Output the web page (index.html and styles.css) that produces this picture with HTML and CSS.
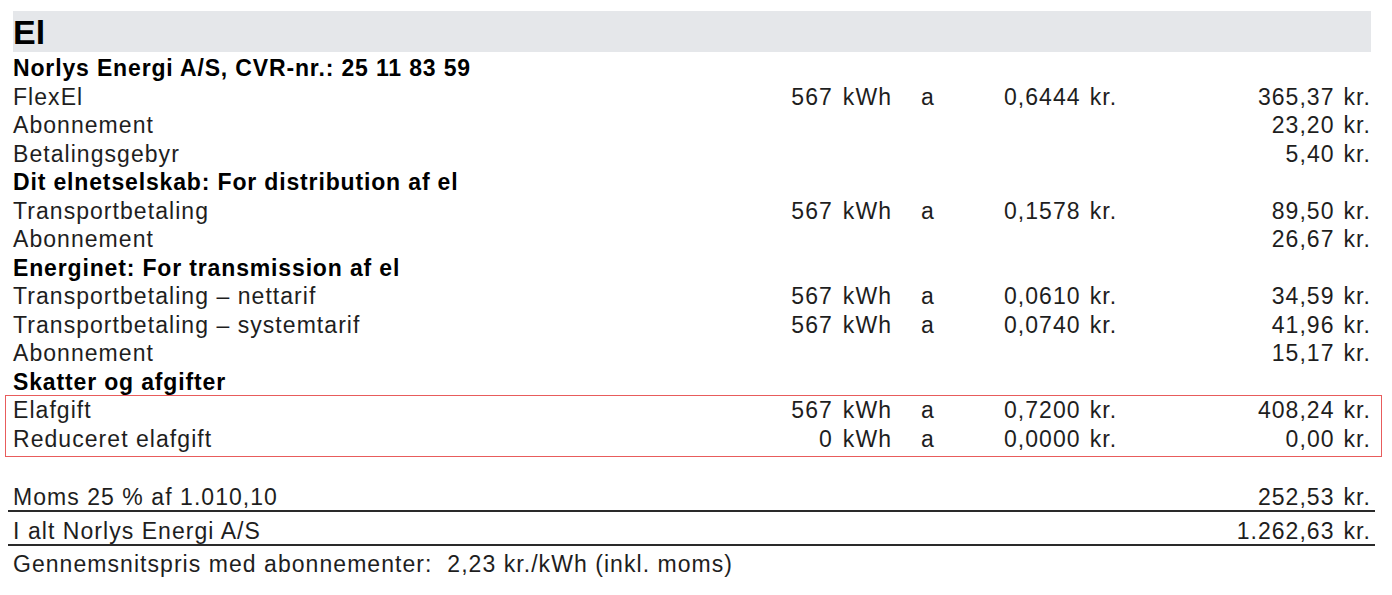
FILE: index.html
```html
<!DOCTYPE html>
<html lang="da">
<head>
<meta charset="utf-8">
<title>El</title>
<link rel="stylesheet" href="styles.css">
</head>
<body>
<div class="sheet">
  <div class="bar">El</div>

  <div class="row head"><span class="label">Norlys Energi A/S, CVR-nr.: 25 11 83 59</span></div>
  <div class="row"><span class="label">FlexEl</span><span class="qty">567<span class="unit">kWh</span></span><span class="a">a</span><span class="rate">0,6444<span class="unit">kr.</span></span><span class="amt">365,37<span class="unit">kr.</span></span></div>
  <div class="row"><span class="label">Abonnement</span><span class="qty"></span><span class="a"></span><span class="rate"></span><span class="amt">23,20<span class="unit">kr.</span></span></div>
  <div class="row"><span class="label">Betalingsgebyr</span><span class="qty"></span><span class="a"></span><span class="rate"></span><span class="amt">5,40<span class="unit">kr.</span></span></div>

  <div class="row head"><span class="label">Dit elnetselskab: For distribution af el</span></div>
  <div class="row"><span class="label">Transportbetaling</span><span class="qty">567<span class="unit">kWh</span></span><span class="a">a</span><span class="rate">0,1578<span class="unit">kr.</span></span><span class="amt">89,50<span class="unit">kr.</span></span></div>
  <div class="row"><span class="label">Abonnement</span><span class="qty"></span><span class="a"></span><span class="rate"></span><span class="amt">26,67<span class="unit">kr.</span></span></div>

  <div class="row head"><span class="label">Energinet: For transmission af el</span></div>
  <div class="row"><span class="label">Transportbetaling – nettarif</span><span class="qty">567<span class="unit">kWh</span></span><span class="a">a</span><span class="rate">0,0610<span class="unit">kr.</span></span><span class="amt">34,59<span class="unit">kr.</span></span></div>
  <div class="row"><span class="label">Transportbetaling – systemtarif</span><span class="qty">567<span class="unit">kWh</span></span><span class="a">a</span><span class="rate">0,0740<span class="unit">kr.</span></span><span class="amt">41,96<span class="unit">kr.</span></span></div>
  <div class="row"><span class="label">Abonnement</span><span class="qty"></span><span class="a"></span><span class="rate"></span><span class="amt">15,17<span class="unit">kr.</span></span></div>

  <div class="row head"><span class="label">Skatter og afgifter</span></div>
  <div class="highlight">
    <div class="row"><span class="label">Elafgift</span><span class="qty">567<span class="unit">kWh</span></span><span class="a">a</span><span class="rate">0,7200<span class="unit">kr.</span></span><span class="amt">408,24<span class="unit">kr.</span></span></div>
    <div class="row"><span class="label">Reduceret elafgift</span><span class="qty">0<span class="unit">kWh</span></span><span class="a">a</span><span class="rate">0,0000<span class="unit">kr.</span></span><span class="amt">0,00<span class="unit">kr.</span></span></div>
  </div>

  <div class="sum first"><span class="label">Moms 25 % af 1.010,10</span><span class="amt">252,53<span class="unit">kr.</span></span></div>
  <div class="sum"><span class="label">I alt Norlys Energi A/S</span><span class="amt">1.262,63<span class="unit">kr.</span></span></div>
  <div class="note">Gennemsnitspris med abonnementer:&nbsp; 2,23 kr./kWh (inkl. moms)</div>
</div>
</body>
</html>
```

FILE: styles.css
```css
html, body {
  margin: 0;
  padding: 0;
  background: #ffffff;
}

body {
  font-family: "Liberation Sans", Arial, sans-serif;
  color: #1e1e1e;
}

.sheet {
  width: 1358px;
  padding: 11px 0 0 13px;
}

.bar {
  background: #e5e7ea;
  height: 39px;
  padding-top: 2px;
  line-height: 39px;
  font-size: 34px;
  font-weight: bold;
  color: #000;
  margin-bottom: 2px;
}

.row {
  display: grid;
  grid-template-columns: 1fr 111px 112px 156px 211px;
  height: 28.5px;
  line-height: 28.5px;
  font-size: 23px;
  letter-spacing: 1.05px;
  white-space: nowrap;
}

.row.head {
  display: block;
  font-weight: bold;
  color: #000;
  letter-spacing: 0.85px;
}

.qty {
  text-align: right;
}

.a {
  padding-left: 29px;
}

.amt {
  text-align: right;
}

.unit {
  margin-left: 10px;
}

.rate .unit,
.amt .unit {
  margin-left: 9px;
}

.highlight {
  margin: -1px -11px 0 -8px;
  padding: 0 10px 3px 7px;
  border: 1px solid #e85c5c;
}

.sum {
  display: flex;
  justify-content: space-between;
  margin: 0 -4px 0 -5px;
  padding: 6px 4px 0 5px;
  height: 26px;
  line-height: 26px;
  font-size: 23px;
  letter-spacing: 1.05px;
  border-bottom: 2px solid #2a2a2a;
  white-space: nowrap;
}

.sum.first {
  margin-top: 27px;
  padding-top: 0;
}

.note {
  padding-top: 5px;
  line-height: 26px;
  font-size: 23px;
  letter-spacing: 1.05px;
  white-space: nowrap;
}
```
